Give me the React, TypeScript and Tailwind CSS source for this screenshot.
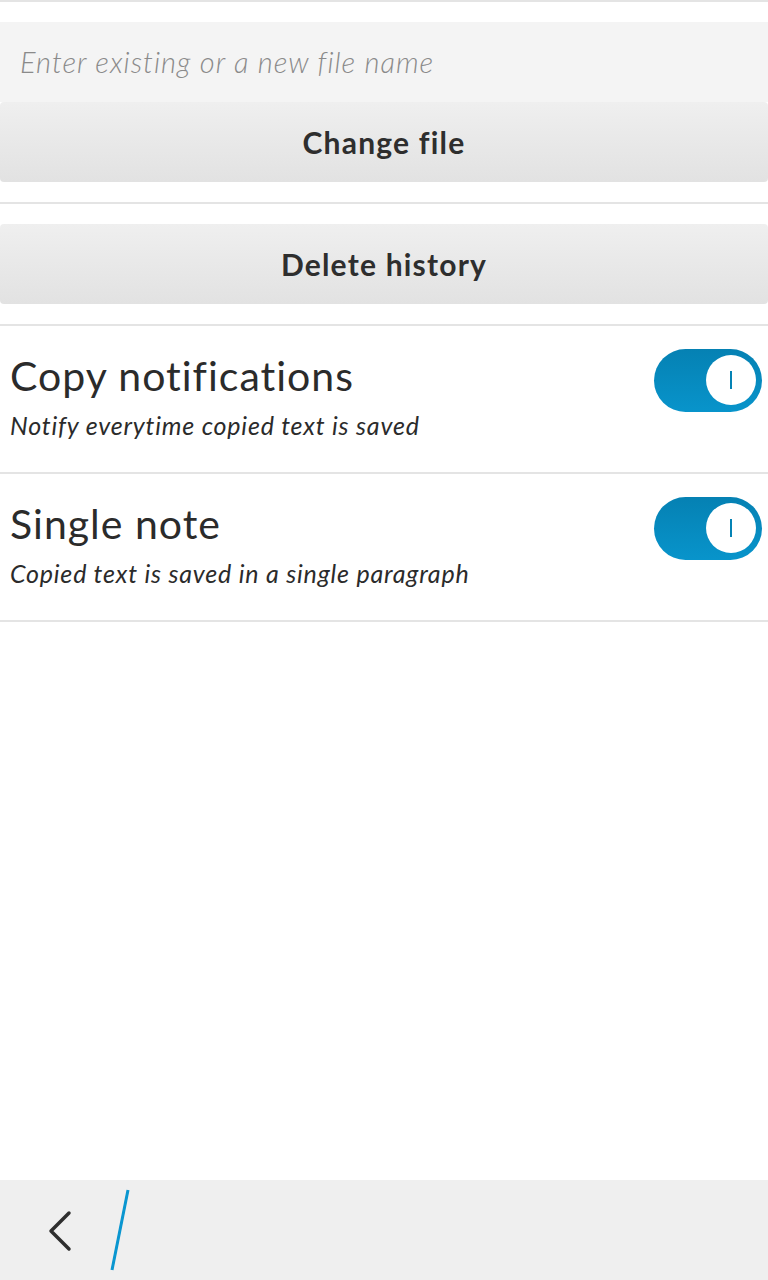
export default function App() {
  const font = { fontFamily: "Lato, 'Open Sans', sans-serif" };
  return (
    <div className="w-[768px] h-[1280px] bg-white flex flex-col text-[#2b2b2b]" style={font}>
      <div className="h-[2px] bg-[#e4e4e4]" />
      <div className="pt-5">
        <div className="h-20 bg-[#f4f4f4] flex items-center px-5">
          <span className="text-[29px] italic font-light tracking-[1px] text-[#8a8a8a]">Enter existing or a new file name</span>
        </div>
        <button className="w-full h-20 rounded-[4px] bg-gradient-to-b from-[#efefef] to-[#e2e2e2] text-[30px] font-bold tracking-[1.2px] text-[#2e2e2e] flex items-center justify-center">
          Change file
        </button>
      </div>
      <div className="h-5" />
      <div className="h-[2px] bg-[#e4e4e4]" />
      <div className="pt-5">
        <button className="w-full h-20 rounded-[4px] bg-gradient-to-b from-[#efefef] to-[#e2e2e2] text-[30px] font-bold tracking-[1.2px] text-[#2e2e2e] flex items-center justify-center">
          Delete history
        </button>
      </div>
      <div className="h-5" />
      <div className="h-[2px] bg-[#e4e4e4]" />
      <SettingRow title="Copy notifications" subtitle="Notify everytime copied text is saved" />
      <div className="h-[2px] bg-[#e4e4e4]" />
      <SettingRow title="Single note" subtitle="Copied text is saved in a single paragraph" />
      <div className="h-[2px] bg-[#e4e4e4]" />
      <div className="flex-1" />
      <div className="h-[100px] bg-[#efefef] flex items-center">
        <svg width="140" height="100" viewBox="0 0 140 100">
          <polyline points="69,33 51,51 69,69" fill="none" stroke="#2e2e2e" strokeWidth="3.5" strokeLinecap="round" strokeLinejoin="round" />
          <line x1="128" y1="10" x2="112" y2="90" stroke="#0a96d0" strokeWidth="3" />
        </svg>
      </div>
    </div>
  );
}

function SettingRow({ title, subtitle }: { title: string; subtitle: string }) {
  return (
    <div className="h-[146px] flex items-center justify-between pl-[10px] pr-[6px]">
      <div className="flex flex-col">
        <span className="text-[41px] leading-[40px] tracking-[1px]">{title}</span>
        <span className="text-[25px] italic leading-[34px] tracking-[0.8px] mt-3">{subtitle}</span>
      </div>
      <div className="relative w-[108px] h-[63px] rounded-full bg-gradient-to-b from-[#0581b3] to-[#0894cb] -mt-[38px]">
        <div className="absolute right-[6px] top-[6.5px] w-[50px] h-[50px] rounded-full bg-white flex items-center justify-center">
          <div className="w-[2px] h-[18px] bg-[#0583b5]" />
        </div>
      </div>
    </div>
  );
}
